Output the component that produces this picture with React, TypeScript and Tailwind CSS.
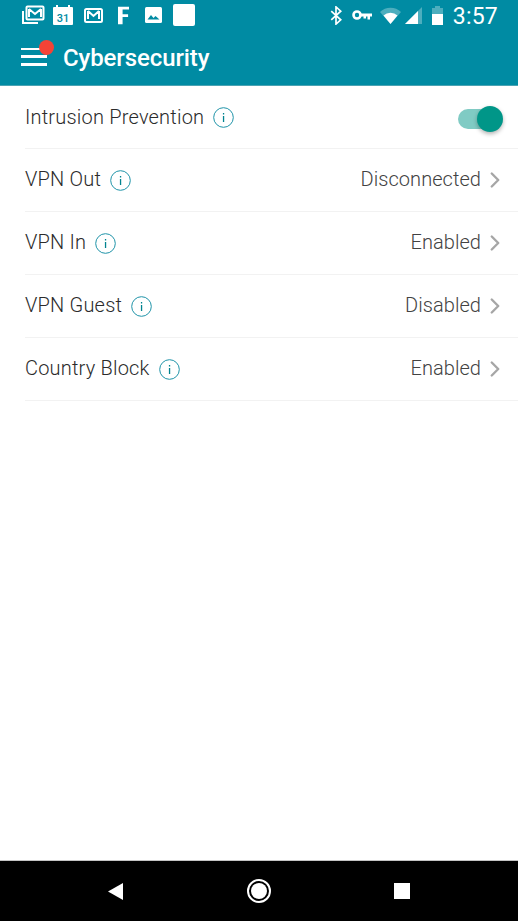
import { ChevronRight } from 'lucide-react';

const settings = [
  { label: 'VPN Out', value: 'Disconnected' },
  { label: 'VPN In', value: 'Enabled' },
  { label: 'VPN Guest', value: 'Disabled' },
  { label: 'Country Block', value: 'Enabled' },
];

function InfoIcon() {
  return (
    <svg viewBox="0 0 21 21" className="ml-[9px] h-[21px] w-[21px] shrink-0">
      <circle cx="10.5" cy="10.5" r="9.8" fill="none" stroke="#1e93a8" strokeWidth="1" />
      <rect x="9.9" y="9" width="1.3" height="6" fill="#00838f" />
      <rect x="9.9" y="6" width="1.3" height="1.5" fill="#00838f" />
    </svg>
  );
}

function StatusIcons() {
  return (
    <div className="flex items-center">
      <svg viewBox="0 0 24 20" className="ml-[21px] h-[20px] w-[24px]">
        <path d="M1 6v13h16v-2H3V6z" fill="#fff" />
        <rect x="5.5" y="1.5" width="17" height="13" rx="1" fill="none" stroke="#fff" strokeWidth="2" />
        <path d="M8 4v8M20 4v8M8 4l6 5 6-5" fill="none" stroke="#fff" strokeWidth="2" />
      </svg>
      <svg viewBox="0 0 20 20" className="ml-[8px] h-[20px] w-[20px]">
        <path d="M1 2h18a1 1 0 0 1 1 1v16a1 1 0 0 1-1 1H1a1 1 0 0 1-1-1V3a1 1 0 0 1 1-1z" fill="#fff" />
        <rect x="3" y="0" width="2" height="3" fill="#fff" />
        <rect x="15" y="0" width="2" height="3" fill="#fff" />
        <text x="10" y="17" textAnchor="middle" fontSize="11" fontWeight="500" fill="#008ba3" fontFamily="Roboto, sans-serif">31</text>
      </svg>
      <svg viewBox="0 0 19 15" className="ml-[11px] h-[15px] w-[19px]">
        <rect x="1" y="1" width="17" height="13" rx="1.5" fill="none" stroke="#fff" strokeWidth="2" />
        <path d="M4 3v8M15 3v8M4 3l5.5 5L15 3" fill="none" stroke="#fff" strokeWidth="2" />
      </svg>
      <svg viewBox="0 0 12 19" className="ml-[15px] h-[19px] w-[11px]">
        <path d="M0 0h12v3H5v5h6v3H5v8H0z" fill="#fff" />
      </svg>
      <svg viewBox="0 0 17 16" className="ml-[16px] h-[16px] w-[17px]">
        <rect width="17" height="16" rx="1.5" fill="#fff" />
        <path d="M2.5 12.5l3.5-4.500 2.500 3 2-2 4 3.500z" fill="#008ba3" />
      </svg>
      <div className="ml-[11px] h-[22px] w-[22px] rounded-[2px] bg-white" />
    </div>
  );
}

function SystemIcons() {
  return (
    <div className="ml-auto flex items-center">
      <svg viewBox="0 0 12 20" className="h-[19px] w-[12px]">
        <path d="M1 5.500l10 9-5 4.500V1l5 4.500-10 9" fill="none" stroke="#fff" strokeWidth="1.8" />
      </svg>
      <svg viewBox="0 0 20 10" className="ml-[10px] h-[10px] w-[20px]">
        <circle cx="5" cy="5" r="3.500" fill="none" stroke="#fff" strokeWidth="2.600" />
        <path d="M8 3.500h12v3h-2v3h-2.500v-3H14v2h-2.500v-2H8z" fill="#fff" />
      </svg>
      <svg viewBox="0 0 21 17" className="ml-[8px] h-[17px] w-[21px]">
        <path d="M0 5a15 15 0 0 1 21 0L10.500 17z" fill="#fff" fillOpacity="0.3" />
        <path d="M3.500 8.500a10 10 0 0 1 14 0L10.500 17z" fill="#fff" />
      </svg>
      <svg viewBox="0 0 17 17" className="ml-[4px] h-[17px] w-[17px]">
        <path d="M17 0v17H0z" fill="#fff" fillOpacity="0.3" />
        <path d="M13 4v13H0z" fill="#fff" />
      </svg>
      <svg viewBox="0 0 11 19" className="ml-[10px] h-[19px] w-[11px]">
        <path d="M3 2V0h5v2h3v17H0V2z" fill="#fff" fillOpacity="0.3" />
        <path d="M0 8h11v11H0z" fill="#fff" />
      </svg>
      <span className="ml-[10px] mr-[20px] pt-[3px] text-[23px] leading-none tracking-[0.2px] text-white">3:57</span>
    </div>
  );
}

export default function App() {
  return (
    <div className="flex h-[921px] w-[518px] flex-col overflow-hidden bg-white font-['Roboto',sans-serif]">
      <header className="h-[86px] shrink-0 border-b border-[#4aa3b3] bg-[#008ba3]">
        <div className="flex h-[30px] items-center">
          <StatusIcons />
          <SystemIcons />
        </div>
        <div className="flex h-[55px] items-center pl-[21px]">
          <div className="relative -mt-[2px] flex h-[18px] w-[26px] flex-col justify-between">
            <span className="h-[2.5px] bg-white" />
            <span className="h-[2.5px] bg-white" />
            <span className="h-[2.5px] bg-white" />
            <span className="absolute -right-[7px] -top-[8px] h-[15px] w-[15px] rounded-full bg-[#f44336]" />
          </div>
          <h1 className="ml-[16px] text-[24px] font-medium tracking-[-0.1px] text-white">Cybersecurity</h1>
        </div>
      </header>

      <main className="flex-1 pl-[25px]">
        <div className="flex h-[63px] items-center border-b border-[#f2f2f2] pr-[15px]">
          <span className="-mt-px text-[20px] font-light tracking-[0.2px] text-[#2b2b2b]">Intrusion Prevention</span>
          <InfoIcon />
          <div className="relative ml-auto mr-[13px] mt-[3px] h-[20px] w-[32px] rounded-full bg-[#80cbc4]">
            <span className="absolute -right-[13px] -top-[3px] h-[26px] w-[26px] rounded-full bg-[#009688] shadow-[0_2px_4px_rgba(0,0,0,0.3)]" />
          </div>
        </div>
        {settings.map((row) => (
          <div key={row.label} className="flex h-[63px] items-center border-b border-[#f2f2f2] pr-[10px]">
            <span className="-mt-[2px] text-[20px] font-light tracking-[0.2px] text-[#2b2b2b]">{row.label}</span>
            <InfoIcon />
            <span className="ml-auto -mt-[2px] text-[20px] font-light tracking-[0.05px] text-[#424242]">{row.value}</span>
            <ChevronRight className="ml-[1px] h-[26px] w-[26px] text-[#a6a6a6]" strokeWidth={2.2} />
          </div>
        ))}
      </main>

      <nav className="flex h-[61px] shrink-0 items-center border-t border-[#c4c4c4] bg-black">
        <svg viewBox="0 0 15 17" className="ml-[108px] h-[17px] w-[15px]">
          <path d="M15 0v17L0 8.500z" fill="#fff" />
        </svg>
        <div className="ml-[124px] flex h-[24px] w-[24px] items-center justify-center rounded-full border-2 border-white">
          <div className="h-[16px] w-[16px] rounded-full bg-white" />
        </div>
        <div className="ml-[123px] h-[16px] w-[16px] bg-white" />
      </nav>
    </div>
  );
}
